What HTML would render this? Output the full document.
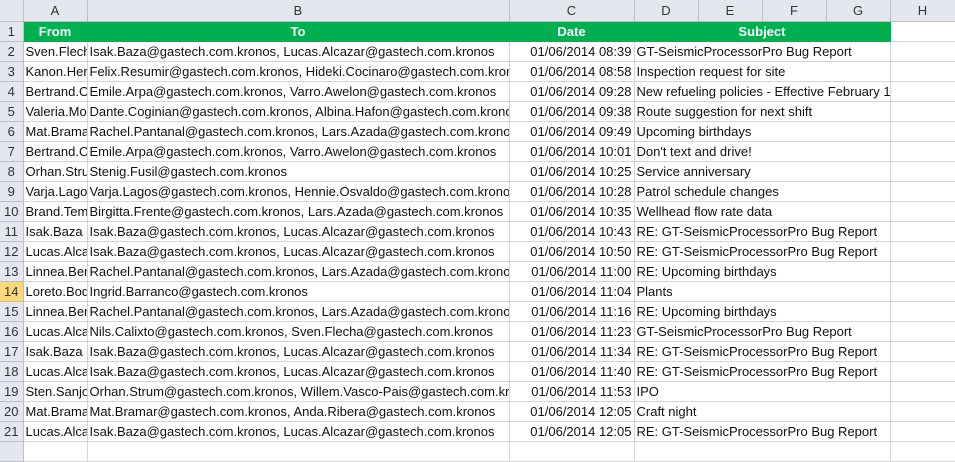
<!DOCTYPE html>
<html><head><style>
body{margin:0;width:955px;height:445px;overflow:hidden;background:#fff;font-family:"Liberation Sans",sans-serif;font-size:13px;color:#111}
table{border-collapse:collapse;table-layout:fixed;position:absolute;left:0;top:0;width:955px}
td{box-sizing:border-box;height:20px;padding:0 2px;border-right:1px solid #d4d4d4;border-bottom:1px solid #d4d4d4;white-space:nowrap;overflow:hidden;line-height:19px;max-width:0}
tr.h td{height:21px;background:#e4e8ee;color:#333;text-align:center;border-color:#b9c0c9;font-size:13px}
td.rh{background:#e4e8ee;color:#333;text-align:center;border-color:#b9c0c9;padding:0}
tr.g td.c{background:#00b050;color:#fff;font-weight:bold;border-color:#00b050}
td.r{text-align:right}
td.s{overflow:visible}
td.sel{background:#f9d97c}
</style></head><body>
<table>
<colgroup><col style="width:23px"><col style="width:64px"><col style="width:422px"><col style="width:125px"><col style="width:64px"><col style="width:64px"><col style="width:64px"><col style="width:64px"><col style="width:65px"></colgroup>
<tr class="h"><td></td><td>A</td><td>B</td><td>C</td><td>D</td><td>E</td><td>F</td><td>G</td><td>H</td></tr>
<tr class="g"><td class="rh">1</td><td class="c" style="text-align:center;overflow:visible">From</td><td class="c" style="text-align:center">To</td><td class="c" style="text-align:center">Date</td><td class="c" colspan="4" style="text-align:center">Subject</td><td></td></tr>
<tr><td class="rh">2</td><td>Sven.Flecha</td><td>Isak.Baza@gastech.com.kronos, Lucas.Alcazar@gastech.com.kronos</td><td class="r">01/06/2014 08:39</td><td class="s" colspan="4">GT-SeismicProcessorPro Bug Report</td><td></td></tr>
<tr><td class="rh">3</td><td>Kanon.Herrero</td><td>Felix.Resumir@gastech.com.kronos, Hideki.Cocinaro@gastech.com.kronos</td><td class="r">01/06/2014 08:58</td><td class="s" colspan="4">Inspection request for site</td><td></td></tr>
<tr><td class="rh">4</td><td>Bertrand.Ovan</td><td>Emile.Arpa@gastech.com.kronos, Varro.Awelon@gastech.com.kronos</td><td class="r">01/06/2014 09:28</td><td class="s" colspan="4">New refueling policies - Effective February 1</td><td></td></tr>
<tr><td class="rh">5</td><td>Valeria.Morlun</td><td>Dante.Coginian@gastech.com.kronos, Albina.Hafon@gastech.com.kronos</td><td class="r">01/06/2014 09:38</td><td class="s" colspan="4">Route suggestion for next shift</td><td></td></tr>
<tr><td class="rh">6</td><td>Mat.Bramar</td><td>Rachel.Pantanal@gastech.com.kronos, Lars.Azada@gastech.com.kronos</td><td class="r">01/06/2014 09:49</td><td class="s" colspan="4">Upcoming birthdays</td><td></td></tr>
<tr><td class="rh">7</td><td>Bertrand.Ovan</td><td>Emile.Arpa@gastech.com.kronos, Varro.Awelon@gastech.com.kronos</td><td class="r">01/06/2014 10:01</td><td class="s" colspan="4">Don't text and drive!</td><td></td></tr>
<tr><td class="rh">8</td><td>Orhan.Strum</td><td>Stenig.Fusil@gastech.com.kronos</td><td class="r">01/06/2014 10:25</td><td class="s" colspan="4">Service anniversary</td><td></td></tr>
<tr><td class="rh">9</td><td>Varja.Lagos</td><td>Varja.Lagos@gastech.com.kronos, Hennie.Osvaldo@gastech.com.kronos</td><td class="r">01/06/2014 10:28</td><td class="s" colspan="4">Patrol schedule changes</td><td></td></tr>
<tr><td class="rh">10</td><td>Brand.Tempestad</td><td>Birgitta.Frente@gastech.com.kronos, Lars.Azada@gastech.com.kronos</td><td class="r">01/06/2014 10:35</td><td class="s" colspan="4">Wellhead flow rate data</td><td></td></tr>
<tr><td class="rh">11</td><td>Isak.Baza</td><td>Isak.Baza@gastech.com.kronos, Lucas.Alcazar@gastech.com.kronos</td><td class="r">01/06/2014 10:43</td><td class="s" colspan="4">RE: GT-SeismicProcessorPro Bug Report</td><td></td></tr>
<tr><td class="rh">12</td><td>Lucas.Alcazar</td><td>Isak.Baza@gastech.com.kronos, Lucas.Alcazar@gastech.com.kronos</td><td class="r">01/06/2014 10:50</td><td class="s" colspan="4">RE: GT-SeismicProcessorPro Bug Report</td><td></td></tr>
<tr><td class="rh">13</td><td>Linnea.Bergen</td><td>Rachel.Pantanal@gastech.com.kronos, Lars.Azada@gastech.com.kronos</td><td class="r">01/06/2014 11:00</td><td class="s" colspan="4">RE: Upcoming birthdays</td><td></td></tr>
<tr><td class="rh sel">14</td><td>Loreto.Bodrogi</td><td>Ingrid.Barranco@gastech.com.kronos</td><td class="r">01/06/2014 11:04</td><td class="s" colspan="4">Plants</td><td></td></tr>
<tr><td class="rh">15</td><td>Linnea.Bergen</td><td>Rachel.Pantanal@gastech.com.kronos, Lars.Azada@gastech.com.kronos</td><td class="r">01/06/2014 11:16</td><td class="s" colspan="4">RE: Upcoming birthdays</td><td></td></tr>
<tr><td class="rh">16</td><td>Lucas.Alcazar</td><td>Nils.Calixto@gastech.com.kronos, Sven.Flecha@gastech.com.kronos</td><td class="r">01/06/2014 11:23</td><td class="s" colspan="4">GT-SeismicProcessorPro Bug Report</td><td></td></tr>
<tr><td class="rh">17</td><td>Isak.Baza</td><td>Isak.Baza@gastech.com.kronos, Lucas.Alcazar@gastech.com.kronos</td><td class="r">01/06/2014 11:34</td><td class="s" colspan="4">RE: GT-SeismicProcessorPro Bug Report</td><td></td></tr>
<tr><td class="rh">18</td><td>Lucas.Alcazar</td><td>Isak.Baza@gastech.com.kronos, Lucas.Alcazar@gastech.com.kronos</td><td class="r">01/06/2014 11:40</td><td class="s" colspan="4">RE: GT-SeismicProcessorPro Bug Report</td><td></td></tr>
<tr><td class="rh">19</td><td>Sten.Sanjorge</td><td>Orhan.Strum@gastech.com.kronos, Willem.Vasco-Pais@gastech.com.kronos</td><td class="r">01/06/2014 11:53</td><td class="s" colspan="4">IPO</td><td></td></tr>
<tr><td class="rh">20</td><td>Mat.Bramar</td><td>Mat.Bramar@gastech.com.kronos, Anda.Ribera@gastech.com.kronos</td><td class="r">01/06/2014 12:05</td><td class="s" colspan="4">Craft night</td><td></td></tr>
<tr><td class="rh">21</td><td>Lucas.Alcazar</td><td>Isak.Baza@gastech.com.kronos, Lucas.Alcazar@gastech.com.kronos</td><td class="r">01/06/2014 12:05</td><td class="s" colspan="4">RE: GT-SeismicProcessorPro Bug Report</td><td></td></tr>
<tr><td class="rh"></td><td></td><td></td><td></td><td colspan="4"></td><td></td></tr>
</table>
</body></html>
